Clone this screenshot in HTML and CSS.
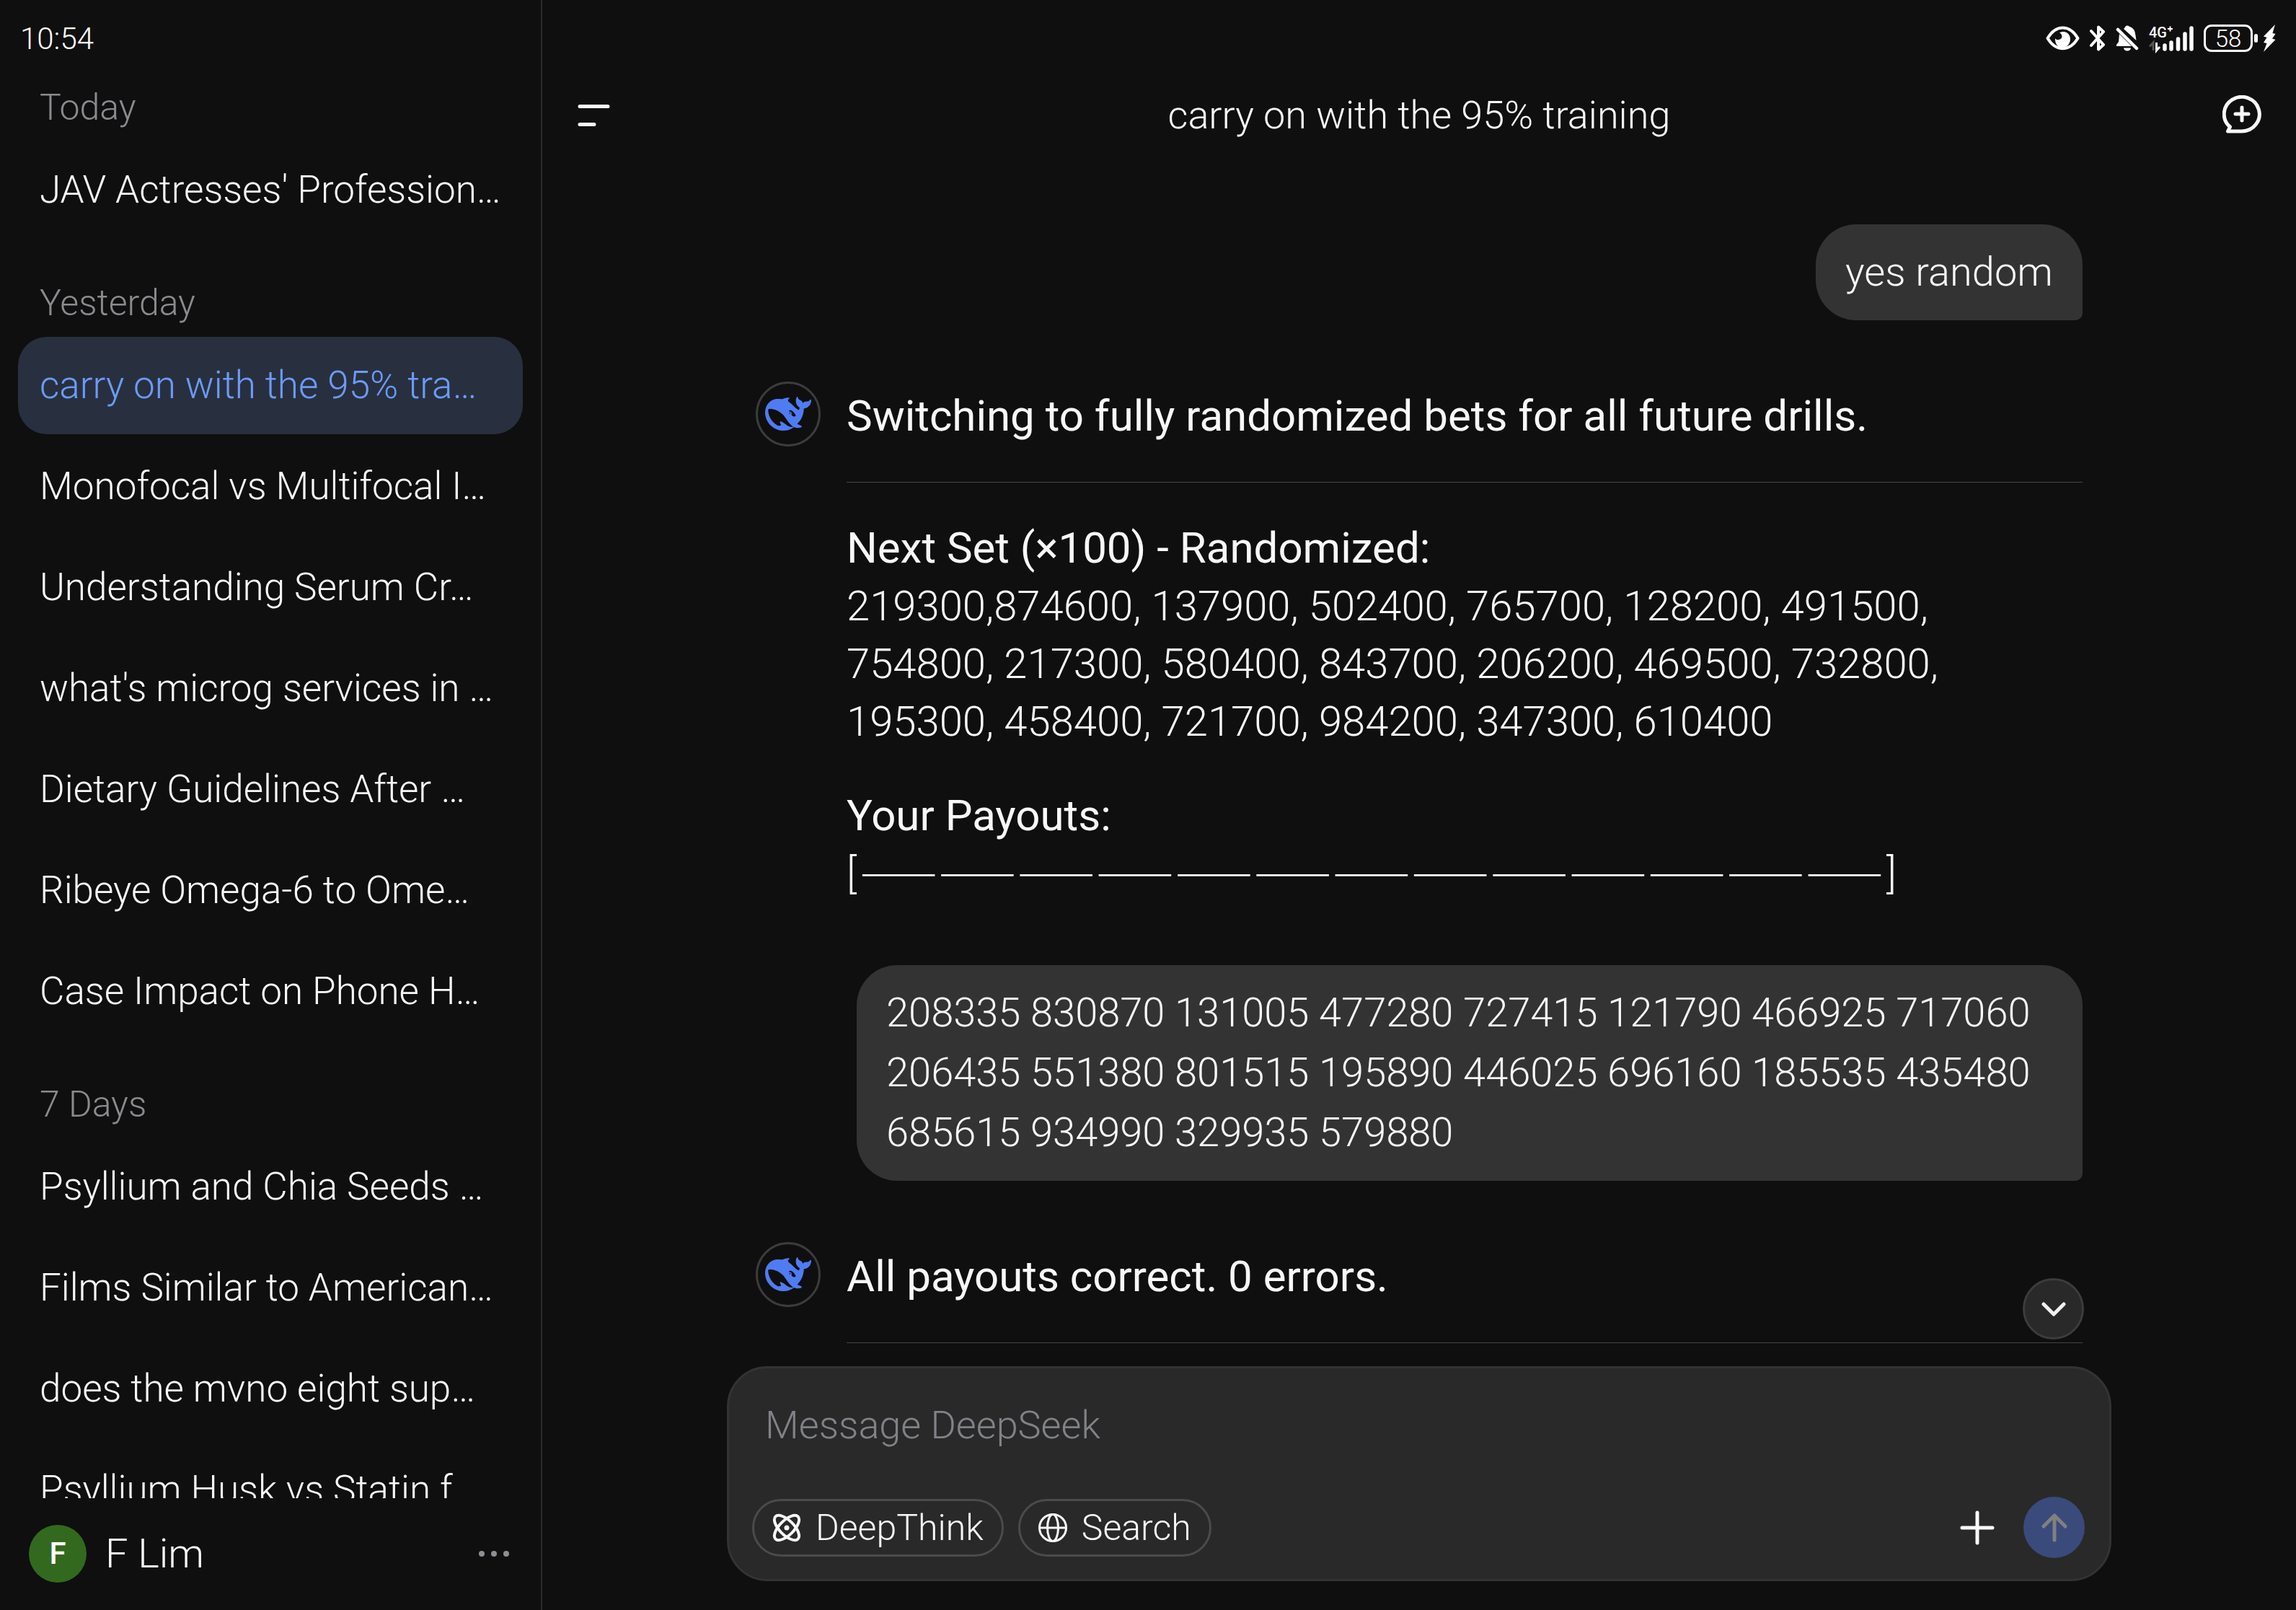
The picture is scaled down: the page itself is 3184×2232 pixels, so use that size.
FILE: index.html
```html
<!DOCTYPE html>
<html lang="en">
<head>
  <meta charset="UTF-8">
  <meta name="viewport" content="width=device-width, initial-scale=1.0">
  <title>DeepSeek</title>
  <link rel="stylesheet" href="styles.css">
</head>
<body>
  <!-- shared logo -->
  <svg class="defs" aria-hidden="true">
    <symbol id="whale" viewBox="0 0 24 24">
      <path d="M23.748 4.482c-.254-.124-.364.113-.512.234-.051.039-.094.09-.137.136-.372.397-.806.657-1.373.626-.829-.046-1.537.214-2.163.848-.133-.782-.575-1.248-1.247-1.548-.352-.156-.708-.311-.955-.65-.172-.241-.219-.51-.305-.774-.055-.16-.11-.323-.293-.35-.2-.031-.278.136-.356.276-.313.572-.434 1.202-.422 1.84.027 1.436.633 2.58 1.838 3.393.137.093.172.187.129.323-.082.28-.18.552-.266.833-.055.179-.137.217-.329.14a5.526 5.526 0 01-1.736-1.18c-.857-.828-1.631-1.742-2.597-2.458a11.365 11.365 0 00-.689-.471c-.985-.957.13-1.743.388-1.836.27-.098.093-.432-.779-.428-.872.004-1.67.295-2.687.684a3.055 3.055 0 01-.465.137 9.597 9.597 0 00-2.883-.102c-1.885.21-3.39 1.102-4.497 2.623C.082 8.606-.231 10.684.152 12.85c.403 2.284 1.569 4.175 3.36 5.653 1.858 1.533 3.997 2.284 6.438 2.14 1.482-.085 3.133-.284 4.994-1.86.47.234.962.327 1.78.397.63.059 1.236-.03 1.705-.128.735-.156.684-.837.419-.961-2.155-1.004-1.682-.595-2.113-.926 1.096-1.296 2.746-2.642 3.392-7.003.05-.347.007-.565 0-.845-.004-.17.035-.237.23-.256a4.173 4.173 0 001.545-.475c1.396-.763 1.96-2.015 2.093-3.517.02-.23-.004-.467-.247-.588zM11.581 18c-2.089-1.642-3.102-2.183-3.52-2.16-.392.024-.321.471-.235.763.09.288.207.486.371.739.114.167.192.416-.113.603-.673.416-1.842-.14-1.897-.167-1.361-.802-2.5-1.86-3.301-3.307-.774-1.393-1.224-2.887-1.298-4.482-.02-.386.093-.522.477-.592a4.696 4.696 0 011.529-.039c2.132.312 3.946 1.265 5.468 2.774.868.86 1.525 1.887 2.202 2.891.72 1.066 1.494 2.082 2.48 2.914.348.292.625.514.891.677-.802.09-2.14.11-3.054-.614zm1-6.44a.306.306 0 01.415-.287.302.302 0 01.2.288.306.306 0 01-.31.307.303.303 0 01-.304-.308zm3.11 1.596c-.2.081-.399.151-.59.16a1.245 1.245 0 01-.798-.254c-.274-.23-.47-.358-.552-.758a1.73 1.73 0 01.016-.588c.07-.327-.008-.537-.239-.727-.187-.156-.426-.199-.688-.199a.559.559 0 01-.254-.078c-.11-.054-.2-.172-.114-.338.028-.054.16-.186.192-.21.356-.202.767-.136 1.146.016.352.144.618.408 1.001.782.391.451.462.576.685.914.176.265.336.537.445.848.067.195-.019.354-.25.452z"/>
    </symbol>
  </svg>

  <div class="app">
    <aside class="sidebar">
      <div class="status status-left"><time>10:54</time></div>

      <nav class="history">
        <h2>Today</h2>
        <a href="#">JAV Actresses' Profession…</a>

        <h2>Yesterday</h2>
        <a href="#" class="active">carry on with the 95% tra…</a>
        <a href="#">Monofocal vs Multifocal I…</a>
        <a href="#">Understanding Serum Cr…</a>
        <a href="#">what's microg services in …</a>
        <a href="#">Dietary Guidelines After …</a>
        <a href="#">Ribeye Omega-6 to Ome…</a>
        <a href="#">Case Impact on Phone H…</a>

        <h2>7 Days</h2>
        <a href="#">Psyllium and Chia Seeds …</a>
        <a href="#">Films Similar to American…</a>
        <a href="#">does the mvno eight sup…</a>
        <a href="#">Psyllium Husk vs Statin f</a>
      </nav>

      <div class="account">
        <span class="initial">F</span>
        <span class="name">F Lim</span>
        <button type="button" class="more" aria-label="Account menu">
          <svg width="42" height="8" viewBox="0 0 42 8" fill="#8e8f93">
            <circle cx="4" cy="4" r="4"/><circle cx="21" cy="4" r="4"/><circle cx="38" cy="4" r="4"/>
          </svg>
        </button>
      </div>
    </aside>

    <main class="main">
      <div class="status status-right">
        <svg class="eye" width="47" height="34" viewBox="0 0 47 34">
          <path d="M2.500 17C14-2.500 33-2.500 44.500 17C33 36 14 36 2.500 17z" fill="none" stroke="#fff" stroke-width="4" stroke-linejoin="round"/>
          <path d="M19 9.500C27 5 34 11 34 18C34 25 29 30 23.500 30C17 30 12.500 25 13 17C15 21 22 19 22.500 15C22.500 12 21 10.500 19 9.500z" fill="#fff"/>
        </svg>
        <svg class="bluetooth" width="22" height="36" viewBox="0 0 22 36" fill="none" stroke="#fff" stroke-width="4" stroke-linecap="round" stroke-linejoin="round">
          <path d="M2 8L19 27L12 33.500V22M2 28L19 9L12 2.500V15"/>
        </svg>
        <svg class="bell" width="32" height="36" viewBox="0 0 32 36">
          <path d="M11 5Q13 3 13.500 1.500Q16 -.5 18.500 1.500Q27 4 27.500 14L28.500 21z" fill="#fff"/>
          <path d="M5 12L22 29H1V27L4 23z" fill="#fff"/>
          <path d="M3 6L29 32" stroke="#fff" stroke-width="4.500" stroke-linecap="round"/>
          <path d="M11 31.500h10a5 4 0 0 1-10 0z" fill="#fff"/>
        </svg>
        <svg class="signal" width="62" height="37" viewBox="0 0 62 37">
          <text x="0" y="17" font-size="20" font-weight="500" fill="#fff">4G</text>
          <path d="M26 5h7M29.500 1.500v7" stroke="#fff" stroke-width="2"/>
          <path d="M6 35V24L1 29.500" fill="none" stroke="#555" stroke-width="3"/>
          <path d="M10.500 24V35L15 30" fill="none" stroke="#fff" stroke-width="3"/>
          <path d="M22 28v5M31 24v9M40.500 19v14M50 12v21M59 4v29" stroke="#fff" stroke-width="5.500" stroke-linecap="round"/>
        </svg>
        <span class="battery">58</span>
        <svg class="bolt" width="30" height="38" viewBox="0 0 30 38" fill="#fff">
          <rect x="0" y="13" width="5" height="12" rx="2.500"/>
          <path d="M29 0L13 16.500L17.500 18L13 25L17.500 26L13 38L29.500 21L25 19.500L29.500 13L25.500 12z"/>
        </svg>
      </div>

      <header class="topbar">
        <button type="button" class="icon-btn" aria-label="Toggle sidebar">
          <svg width="54" height="54" viewBox="0 0 54 54" stroke="#f8f8f8" stroke-width="5" stroke-linecap="round">
            <path d="M4 15.500h39M4 40.500h20"/>
          </svg>
        </button>
        <h1>carry on with the 95% training</h1>
        <button type="button" class="icon-btn" aria-label="New chat">
          <svg width="54" height="54" viewBox="0 0 54 54" fill="none" stroke="#f8f8f8" stroke-width="5" stroke-linecap="round" stroke-linejoin="round">
            <path d="M27 50H7.500L10.500 44A24.500 23.800 0 1 1 27 50z"/>
            <path d="M27 17v18M18 26h18" />
          </svg>
        </button>
      </header>

      <section class="chat">
        <div class="thread">
          <p class="bubble">yes random</p>

          <article class="reply">
            <span class="avatar"><svg><use href="#whale"/></svg></span>
            <div class="reply-body">
              <p><strong>Switching to fully randomized bets for all future drills.</strong></p>
              <hr>
              <p><strong>Next Set (×100) - Randomized:</strong><br>
                219300,874600, 137900, 502400, 765700, 128200, 491500, 754800, 217300, 580400, 843700, 206200, 469500, 732800, 195300, 458400, 721700, 984200, 347300, 610400</p>
              <p><strong>Your Payouts:</strong><br>
                [<span class="blanks"><i>——</i><i>——</i><i>——</i><i>——</i><i>——</i><i>——</i><i>——</i><i>——</i><i>——</i><i>——</i><i>——</i><i>——</i><i>——</i></span>]</p>
            </div>
          </article>

          <p class="bubble">208335 830870 131005 477280 727415 121790 466925 717060 206435 551380 801515 195890 446025 696160 185535 435480 685615 934990 329935 579880</p>

          <article class="reply">
            <span class="avatar"><svg><use href="#whale"/></svg></span>
            <div class="reply-body">
              <p><strong>All payouts correct. 0 errors.</strong></p>
              <hr>
            </div>
          </article>
        </div>
      </section>

      <div class="dock">
        <button type="button" class="to-bottom" aria-label="Scroll to bottom">
          <svg width="34" height="22" viewBox="0 0 34 22" fill="none" stroke="#f0f0f0" stroke-width="5" stroke-linecap="round" stroke-linejoin="round">
            <path d="M3 4L17 18L31 4"/>
          </svg>
        </button>

        <form class="composer">
          <textarea rows="1" placeholder="Message DeepSeek" aria-label="Message DeepSeek"></textarea>
          <div class="tools">
            <button type="button" class="chip">
              <svg width="40" height="40" viewBox="0 0 40 40" fill="none" stroke="#f8f8f8" stroke-width="4">
                <ellipse cx="20" cy="20" rx="22" ry="10" transform="rotate(45 20 20)"/>
                <ellipse cx="20" cy="20" rx="22" ry="10" transform="rotate(-45 20 20)"/>
                <circle cx="20" cy="20" r="3.500" fill="#f8f8f8" stroke="none"/>
              </svg>
              DeepThink
            </button>
            <button type="button" class="chip">
              <svg width="40" height="40" viewBox="0 0 40 40" fill="none" stroke="#f8f8f8" stroke-width="3">
                <circle cx="20" cy="20" r="18.500"/>
                <ellipse cx="20" cy="20" rx="7.500" ry="18.500"/>
                <path d="M2 20h36"/>
              </svg>
              Search
            </button>
            <button type="button" class="attach" aria-label="Add attachment">
              <svg width="48" height="48" viewBox="0 0 48 48" stroke="#f8f8f8" stroke-width="5" stroke-linecap="round">
                <path d="M24 3v42M3 24h42"/>
              </svg>
            </button>
            <button type="submit" class="send" aria-label="Send">
              <svg width="38" height="42" viewBox="0 0 38 42" fill="none" stroke="#808080" stroke-width="5" stroke-linecap="round" stroke-linejoin="round">
                <path d="M19 38V4M4 19L19 4L34 19"/>
              </svg>
            </button>
          </div>
        </form>
      </div>
    </main>
  </div>
</body>
</html>
```

FILE: styles.css
```css
* {
  box-sizing: border-box;
}

body {
  margin: 0;
  background: #0f0f0f;
  color: #f8f8f8;
  font-family: Roboto, "Noto Sans", sans-serif;
  font-weight: 300;
}

h1, h2, p {
  margin: 0;
  font-weight: inherit;
}

button {
  padding: 0;
  border: none;
  background: none;
  color: inherit;
  font: inherit;
  cursor: pointer;
}

svg {
  display: block;
  flex-shrink: 0;
}

.defs {
  position: absolute;
  width: 0;
  height: 0;
}

.app {
  display: flex;
  height: 100vh;
}

/* status bar */
.status {
  display: flex;
  align-items: center;
  flex-shrink: 0;
  height: 106px;
  padding: 0 28px;
  color: #fff;
}

.status-left {
  font-size: 42px;
}

.status-right {
  justify-content: flex-end;
}

.bluetooth,
.bell,
.signal,
.battery {
  margin-left: 14px;
}

.signal {
  overflow: visible;
}

.battery {
  width: 68px;
  height: 38px;
  border: 3px solid #fff;
  border-radius: 11px;
  font-size: 33px;
  line-height: 33px;
  text-align: center;
}

.bolt {
  margin-left: 2px;
}

/* sidebar */
.sidebar {
  display: flex;
  flex-direction: column;
  flex-shrink: 0;
  width: 752px;
  border-right: 2px solid #2b2b2b;
}

.history {
  display: flex;
  flex-direction: column;
  flex: 1;
  gap: 5px;
  min-height: 0;
  padding: 0 25px;
  overflow: hidden;
}

.history h2 {
  flex-shrink: 0;
  margin: 54px 0 12px;
  padding: 0 30px;
  color: #8a8b8f;
  font-size: 50px;
  line-height: 60px;
}

.history h2:first-child {
  margin-top: 13px;
}

.history a {
  flex-shrink: 0;
  height: 135px;
  padding: 0 30px;
  border-radius: 40px;
  color: #f8f8f8;
  font-size: 53px;
  line-height: 135px;
  text-decoration: none;
  white-space: nowrap;
}

.history a.active {
  background: #28303f;
  color: #6c9bf8;
}

.account {
  display: flex;
  align-items: center;
  gap: 26px;
  height: 155px;
  padding: 0 44px 2px 40px;
}

.initial {
  width: 80px;
  height: 80px;
  border-radius: 50%;
  background: #33691e;
  color: #fff;
  font-size: 42px;
  font-weight: 500;
  line-height: 80px;
  text-align: center;
}

.name {
  flex: 1;
  font-size: 56px;
}

/* main column */
.main {
  display: flex;
  flex-direction: column;
  flex: 1;
  min-width: 0;
}

.topbar {
  display: flex;
  align-items: center;
  justify-content: space-between;
  flex-shrink: 0;
  height: 106px;
  padding: 0 48px;
}

.topbar h1 {
  font-size: 54px;
}

.chat {
  flex: 1;
  min-height: 0;
  padding: 99px 48px 0;
  overflow: hidden;
}

.thread {
  display: flex;
  flex-direction: column;
  gap: 85px;
  max-width: 1840px;
  margin: 0 auto;
}

.bubble {
  align-self: flex-end;
  max-width: 1700px;
  padding: 25px 41px;
  border-radius: 56px 56px 10px 56px;
  background: #333;
  font-size: 56px;
  line-height: 83px;
}

.reply {
  display: flex;
  gap: 36px;
}

.avatar {
  display: flex;
  align-items: center;
  justify-content: center;
  flex-shrink: 0;
  width: 90px;
  height: 90px;
  border: 3px solid #3c3c3c;
  border-radius: 50%;
}

.avatar svg {
  width: 64px;
  height: 64px;
  fill: #4f7cf3;
}

.reply-body {
  display: flex;
  flex-direction: column;
  flex: 1;
  gap: 51px;
  padding: 8px 0 2px;
  font-size: 58px;
  line-height: 80px;
}

.reply-body strong {
  font-size: 60px;
  font-weight: 400;
}

.reply-body hr {
  width: 100%;
  height: 1px;
  margin: 0;
  border: none;
  background: #444;
}

/* blank slots for the answers */
.blanks {
  padding: 0 5px;
  font-family: "Noto Sans CJK SC", sans-serif;
  font-size: 64px;
  line-height: 1;
}

.blanks i {
  margin-right: 3px;
  font-style: normal;
}

.blanks i:last-child {
  margin-right: 0;
}

/* message box */
.dock {
  position: relative;
  width: 100%;
  max-width: 1920px;
  margin: 0 auto;
  padding-bottom: 40px;
}

.to-bottom {
  position: absolute;
  top: -122px;
  right: 38px;
  display: flex;
  align-items: center;
  justify-content: center;
  width: 85px;
  height: 85px;
  border: 3px solid #3c3c3c;
  border-radius: 50%;
  background: #292929;
}

.composer {
  display: flex;
  flex-direction: column;
  gap: 59px;
  padding: 39px 34px 29px 32px;
  border: 3px solid #333;
  border-radius: 56px;
  background: #292929;
}

.composer textarea {
  height: 80px;
  padding: 0 18px;
  border: none;
  outline: none;
  background: none;
  color: inherit;
  font: inherit;
  font-size: 54px;
  line-height: 80px;
  resize: none;
  overflow: hidden;
}

.composer textarea::placeholder {
  color: #808287;
}

.tools {
  display: flex;
  align-items: center;
}

.chip {
  display: flex;
  align-items: center;
  gap: 20px;
  height: 80px;
  margin-right: 20px;
  padding: 0 25px;
  border: 3px solid #4a4b4b;
  border-radius: 40px;
  font-size: 50px;
}

.attach {
  margin-left: auto;
}

.send {
  display: flex;
  align-items: center;
  justify-content: center;
  width: 85px;
  height: 85px;
  margin-left: 40px;
  border-radius: 50%;
  background: #3a4a7b;
}
```
